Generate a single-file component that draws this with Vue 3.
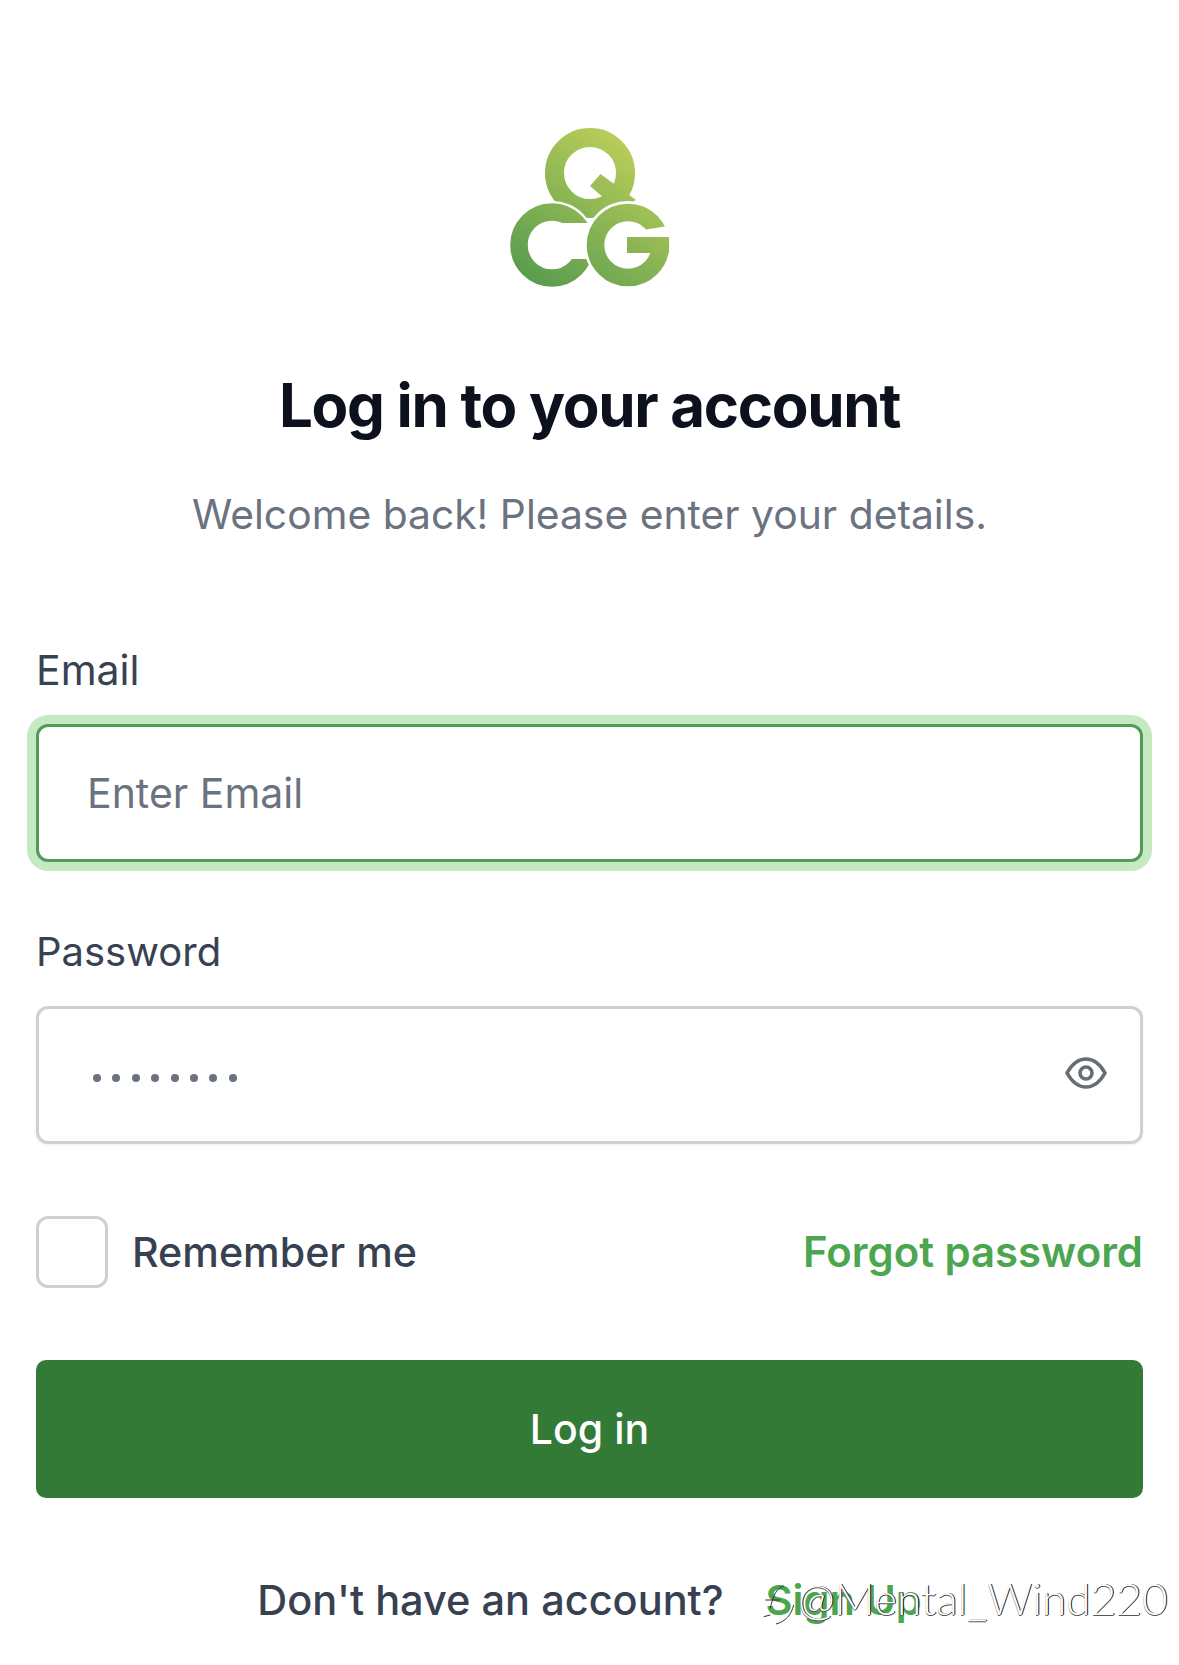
<script setup>
const dots = 8;
</script>

<template>
  <div class="page">
    <svg class="logo" viewBox="505 125 170 165" width="170" height="165">
      <defs>
        <linearGradient id="leaf" gradientUnits="userSpaceOnUse" x1="530" y1="290" x2="640" y2="130">
          <stop offset="0" stop-color="#549a4e" />
          <stop offset="1" stop-color="#c4d25a" />
        </linearGradient>
      </defs>
      <circle cx="590" cy="173" r="35.5" fill="none" stroke="url(#leaf)" stroke-width="19" />
      <polygon points="590,186 600.5,174 636,200 618,210" fill="url(#leaf)" />
      <circle cx="552" cy="245" r="44" fill="#fff" />
      <circle cx="552" cy="245" r="33" fill="none" stroke="url(#leaf)" stroke-width="17.5" />
      <rect x="562" y="223" width="34" height="36" fill="#fff" />
      <circle cx="628" cy="245" r="44" fill="#fff" />
      <circle cx="628" cy="245" r="32.5" fill="none" stroke="url(#leaf)" stroke-width="17.5" />
      <polygon points="646,229.500 665,226.500 675,226.500 675,237 646,237" fill="#fff" />
      <rect x="627" y="237" width="42" height="16" fill="url(#leaf)" />
    </svg>

    <h1 class="title">Log in to your account</h1>
    <p class="subtitle">Welcome back! Please enter your details.</p>

    <label class="label email-label">Email</label>
    <div class="field focused">
      <span class="placeholder">Enter Email</span>
    </div>

    <label class="label password-label">Password</label>
    <div class="field password">
      <div class="dots">
        <span v-for="n in dots" :key="n" class="dot"></span>
      </div>
      <svg class="eye" viewBox="0 0 42 32" width="42" height="32" fill="none" stroke="#666d78" stroke-width="3.600">
        <path d="M2 16C7 7 13 2 21 2S35 7 40 16C35 25 29 30 21 30S7 25 2 16Z" stroke-linejoin="round" />
        <circle cx="21" cy="16" r="6" />
      </svg>
    </div>

    <div class="options">
      <div class="remember">
        <span class="checkbox"></span>
        <span>Remember me</span>
      </div>
      <a class="forgot">Forgot password</a>
    </div>

    <button class="login">Log in</button>

    <div class="signup">
      <span>Don't have an account?</span>
      <a class="signup-link">Sign Up</a>
    </div>

    <div class="watermark">
      <svg class="squiggle" viewBox="0 0 44 44" width="44" height="44" fill="none" stroke="#333" stroke-width="1">
        <path d="M25.700 11C19 13.300 15.700 18.300 12.300 33.300M7.300 25H22.300M5.700 41.700L12.300 40M35.700 30C33.300 40 27.300 46.700 18 49" />
      </svg>
      <span>@Mental_Wind220</span>
    </div>
  </div>
</template>

<style>
html, body {
  background: #fff;
}
</style>

<style scoped>
.page {
  position: relative;
  box-sizing: border-box;
  width: 1179px;
  height: 1665px;
  padding: 125px 36px 0;
  overflow: hidden;
  background: #fff;
  font-family: Inter, "Liberation Sans", sans-serif;
}
.logo {
  display: block;
  margin: 0 auto;
}
.title {
  margin: 79px 0 0;
  font-size: 60px;
  line-height: 72px;
  font-weight: 700;
  letter-spacing: -1.3px;
  color: #0c111d;
  text-align: center;
}
.subtitle {
  margin: 43px 0 0;
  font-size: 40.800px;
  line-height: 60px;
  color: #6b7280;
  text-align: center;
}
.label {
  display: block;
  font-size: 41px;
  line-height: 60px;
  color: #374151;
}
.email-label {
  margin-top: 96px;
}
.password-label {
  margin-top: 60px;
  font-size: 40px;
}
.field {
  box-sizing: border-box;
  height: 138px;
  margin-top: 24px;
  padding: 0 33px 0 48px;
  display: flex;
  align-items: center;
  justify-content: space-between;
  border: 3px solid #d0d0d0;
  border-radius: 12px;
  background: #fff;
  box-shadow: 0 1px 3px rgba(16, 24, 40, 0.08);
}
.focused {
  border-color: #4f9c58;
  box-shadow: 0 0 0 9px #c5eac3;
}
.placeholder {
  font-size: 41px;
  color: #6b7280;
}
.dots {
  display: flex;
  gap: 11.400px;
  margin: 6px 0 0 6px;
}
.dot {
  width: 8px;
  height: 8px;
  border-radius: 50%;
  background: #6b7280;
}
.eye {
  display: block;
  margin-bottom: 4px;
}
.options {
  display: flex;
  align-items: center;
  justify-content: space-between;
  margin-top: 72px;
  line-height: 70px;
  color: #374151;
}
.remember {
  display: flex;
  align-items: center;
  gap: 24px;
  font-size: 41.200px;
  font-weight: 500;
}
.checkbox {
  box-sizing: border-box;
  width: 72px;
  height: 72px;
  border: 3px solid #d0d0d0;
  border-radius: 12px;
}
.forgot {
  font-size: 41.900px;
  font-weight: 600;
  color: #4ca64f;
}
.login {
  display: block;
  width: 100%;
  height: 138px;
  margin-top: 72px;
  padding: 0;
  border: 0;
  border-radius: 10px;
  background: #337a37;
  color: #fff;
  font-family: inherit;
  font-size: 41px;
  font-weight: 500;
}
.signup {
  display: flex;
  justify-content: center;
  gap: 42px;
  margin-top: 72px;
  font-size: 41.500px;
  line-height: 60px;
  font-weight: 500;
  color: #374151;
}
.signup-link {
  font-weight: 600;
  color: #4ca64f;
}
.watermark {
  position: absolute;
  left: 758px;
  top: 1567px;
  display: flex;
  align-items: center;
  height: 60px;
  font-family: Lato, sans-serif;
  font-size: 44.200px;
  font-weight: 300;
  color: #fff;
  text-shadow: 1px 0 0 #111, 0 1px 0 #555;
}
.squiggle {
  margin-right: -4px;
  overflow: visible;
}
</style>
